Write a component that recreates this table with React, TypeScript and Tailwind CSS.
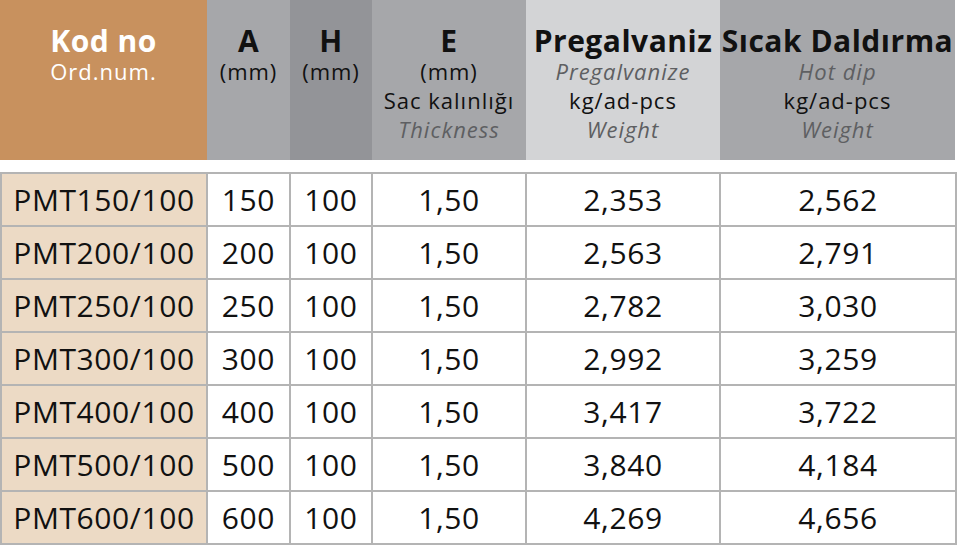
const cols = 'grid grid-cols-[207px_83px_82px_154px_194px_237px]'

const rows = [
  ['PMT150/100', '150', '100', '1,50', '2,353', '2,562'],
  ['PMT200/100', '200', '100', '1,50', '2,563', '2,791'],
  ['PMT250/100', '250', '100', '1,50', '2,782', '3,030'],
  ['PMT300/100', '300', '100', '1,50', '2,992', '3,259'],
  ['PMT400/100', '400', '100', '1,50', '3,417', '3,722'],
  ['PMT500/100', '500', '100', '1,50', '3,840', '4,184'],
  ['PMT600/100', '600', '100', '1,50', '4,269', '4,656'],
]

const title = 'text-[30px] leading-[33px] font-bold tracking-[0.5px] whitespace-nowrap'
const sub = 'text-[22px] leading-[29px] tracking-[1px] whitespace-nowrap'
const note = `${sub} italic text-[#5e5f62]`

export default function App() {
  return (
    <div className="w-[957px] h-[546px] bg-white text-[#111] font-['Open_Sans',sans-serif] overflow-hidden">
      {/* Header */}
      <div className={`${cols} h-[160px] text-center`}>
        <div className="bg-[#c8915e] text-white pt-[24px]">
          <div className={title}>Kod no</div>
          <div className={sub}>Ord.num.</div>
        </div>
        <div className="bg-[#a6a7aa] pt-[24px]">
          <div className={title}>A</div>
          <div className={sub}>(mm)</div>
        </div>
        <div className="bg-[#939498] pt-[24px]">
          <div className={title}>H</div>
          <div className={sub}>(mm)</div>
        </div>
        <div className="bg-[#a6a7aa] pt-[24px]">
          <div className={title}>E</div>
          <div className={sub}>(mm)</div>
          <div className={sub}>Sac kalınlığı</div>
          <div className={note}>Thickness</div>
        </div>
        <div className="bg-[#d3d4d6] pt-[24px]">
          <div className={title}>Pregalvaniz</div>
          <div className={note}>Pregalvanize</div>
          <div className={sub}>kg/ad-pcs</div>
          <div className={note}>Weight</div>
        </div>
        <div className="bg-[#a6a7aa] pt-[24px] mr-[2px]">
          <div className={title}>Sıcak Daldırma</div>
          <div className={note}>Hot dip</div>
          <div className={sub}>kg/ad-pcs</div>
          <div className={note}>Weight</div>
        </div>
      </div>

      {/* Body */}
      <div className="mt-[12px] border-t-2 border-l-2 border-[#b4b4b4]">
        {rows.map((r) => (
          <div key={r[0]} className="grid grid-cols-[206px_83px_82px_154px_194px_236px] h-[53px] text-[30px] tracking-[0.6px]">
            {r.map((c, i) => (
              <div
                key={i}
                className={`flex items-center justify-center border-r-2 border-b-2 border-[#b4b4b4] ${i === 0 ? 'bg-[#ecdac5]' : ''}`}
              >
                {c}
              </div>
            ))}
          </div>
        ))}
      </div>
    </div>
  )
}
